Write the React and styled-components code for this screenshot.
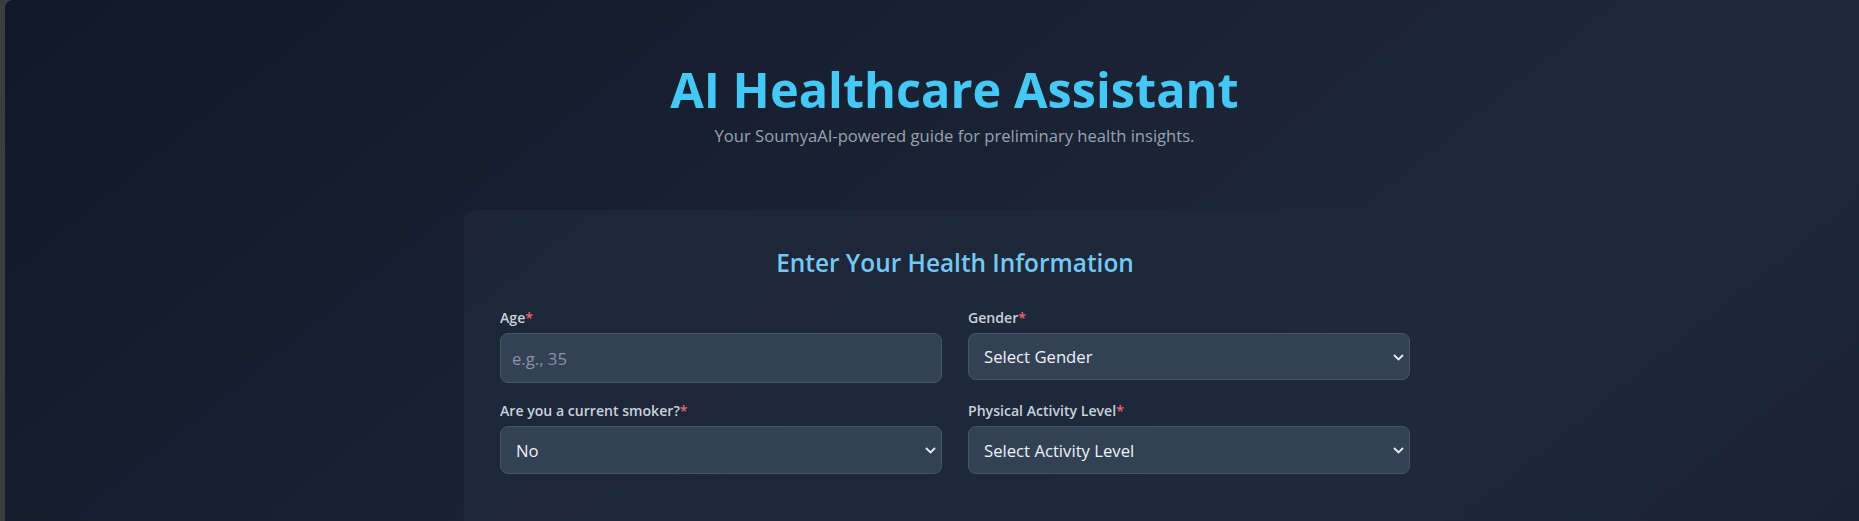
import React from "react";
import styled, { createGlobalStyle } from "styled-components";

const GlobalStyle = createGlobalStyle`
  html, body {
    margin: 0;
    padding: 0;
    height: 100%;
    overflow: hidden;
    background: #3d3d3d;
  }
  body {
    font-family: "Open Sans", "Noto Sans", Arial, sans-serif;
    -webkit-font-smoothing: antialiased;
  }
  #root {
    height: 100%;
  }
  * {
    box-sizing: border-box;
  }
`;

const Page = styled.div`
  margin-left: 5px;
  height: 100vh;
  overflow: hidden;
  border-top-left-radius: 8px;
  background-color: #1a2234;
  background-image: linear-gradient(
    to bottom right,
    #111827 0%,
    #1e293b 50%,
    #111827 100%
  );
  background-size: 100% 1500px;
  background-repeat: no-repeat;
  padding: 60px 0 0 45px;
  display: flex;
  flex-direction: column;
  align-items: center;
`;

const Header = styled.header`
  display: flex;
  flex-direction: column;
  align-items: center;
  gap: 6px;
  margin-bottom: 62px;
`;

const Title = styled.h1`
  margin: 0;
  font-size: 48.7px;
  line-height: 58px;
  font-weight: 700;
  color: #45c8f5;
  letter-spacing: 0;
`;

const Subtitle = styled.p`
  margin: 0;
  font-size: 16.6px;
  line-height: 24px;
  color: #98a2b2;
`;

const Card = styled.section`
  width: 981px;
  flex-shrink: 0;
  border-radius: 12px;
  background: rgba(30, 41, 59, 0.72);
  padding: 37px 35px 120px 36px;
`;

const CardTitle = styled.h2`
  margin: 0 0 29px;
  text-align: center;
  font-size: 24.4px;
  line-height: 32px;
  font-weight: 600;
  color: #74c8f2;
`;

const Grid = styled.div`
  display: grid;
  grid-template-columns: 1fr 1fr;
  column-gap: 26px;
  row-gap: 18px;
  align-items: start;
`;

const Field = styled.div`
  display: flex;
  flex-direction: column;
  gap: 5px;
`;

const Label = styled.label`
  font-size: 14.1px;
  line-height: 20px;
  font-weight: 600;
  color: #c9d1dc;
`;

const Req = styled.span`
  color: #ef6470;
`;

const controlBase = `
  width: 100%;
  border: 1px solid #475569;
  border-radius: 8px;
  background: #334155;
  color: #eef2f7;
  font-family: "Open Sans", "Noto Sans", Arial, sans-serif;
  font-size: 16.7px;
  outline: none;
  margin: 0;
`;

const Input = styled.input`
  ${controlBase}
  height: 50px;
  padding: 0 11px;
  &::placeholder {
    color: #8a94a4;
    opacity: 1;
  }
`;

const SelectWrap = styled.div`
  position: relative;
`;

const Select = styled.select`
  ${controlBase}
  appearance: none;
  -webkit-appearance: none;
  height: ${(p) => p.$h || 47}px;
  padding: 0 30px 0 15px;
  cursor: pointer;
`;

const Chevron = styled.svg`
  position: absolute;
  right: 6px;
  top: 50%;
  width: 11px;
  height: 7px;
  margin-top: -3px;
  pointer-events: none;
`;

function ChevronIcon() {
  return (
    <Chevron viewBox="0 0 11 7" aria-hidden="true">
      <path
        d="M1 1 L5.5 5.5 L10 1"
        fill="none"
        stroke="#e5e9ef"
        strokeWidth="1.9"
        strokeLinecap="butt"
        strokeLinejoin="miter"
      />
    </Chevron>
  );
}

function SelectField({ label, value, options, h }) {
  return (
    <Field>
      <Label>
        {label}
        <Req>*</Req>
      </Label>
      <SelectWrap>
        <Select defaultValue={value} $h={h}>
          {options.map((o) => (
            <option key={o.value} value={o.value}>
              {o.label}
            </option>
          ))}
        </Select>
        <ChevronIcon />
      </SelectWrap>
    </Field>
  );
}

export default function App() {
  return (
    <>
      <GlobalStyle />
      <Page>
        <Header>
          <Title>AI Healthcare Assistant</Title>
          <Subtitle>Your SoumyaAI-powered guide for preliminary health insights.</Subtitle>
        </Header>
        <Card>
          <CardTitle>Enter Your Health Information</CardTitle>
          <Grid>
            <Field>
              <Label>
                Age<Req>*</Req>
              </Label>
              <Input type="number" placeholder="e.g., 35" />
            </Field>
            <SelectField
              label="Gender"
              value=""
              options={[
                { value: "", label: "Select Gender" },
                { value: "male", label: "Male" },
                { value: "female", label: "Female" },
                { value: "other", label: "Other" },
              ]}
            />
            <SelectField
              label="Are you a current smoker?"
              value="no"
              h={48}
              options={[
                { value: "no", label: "No" },
                { value: "yes", label: "Yes" },
              ]}
            />
            <SelectField
              label="Physical Activity Level"
              value=""
              h={48}
              options={[
                { value: "", label: "Select Activity Level" },
                { value: "low", label: "Sedentary" },
                { value: "moderate", label: "Moderate" },
                { value: "high", label: "Active" },
              ]}
            />
          </Grid>
        </Card>
      </Page>
    </>
  );
}
